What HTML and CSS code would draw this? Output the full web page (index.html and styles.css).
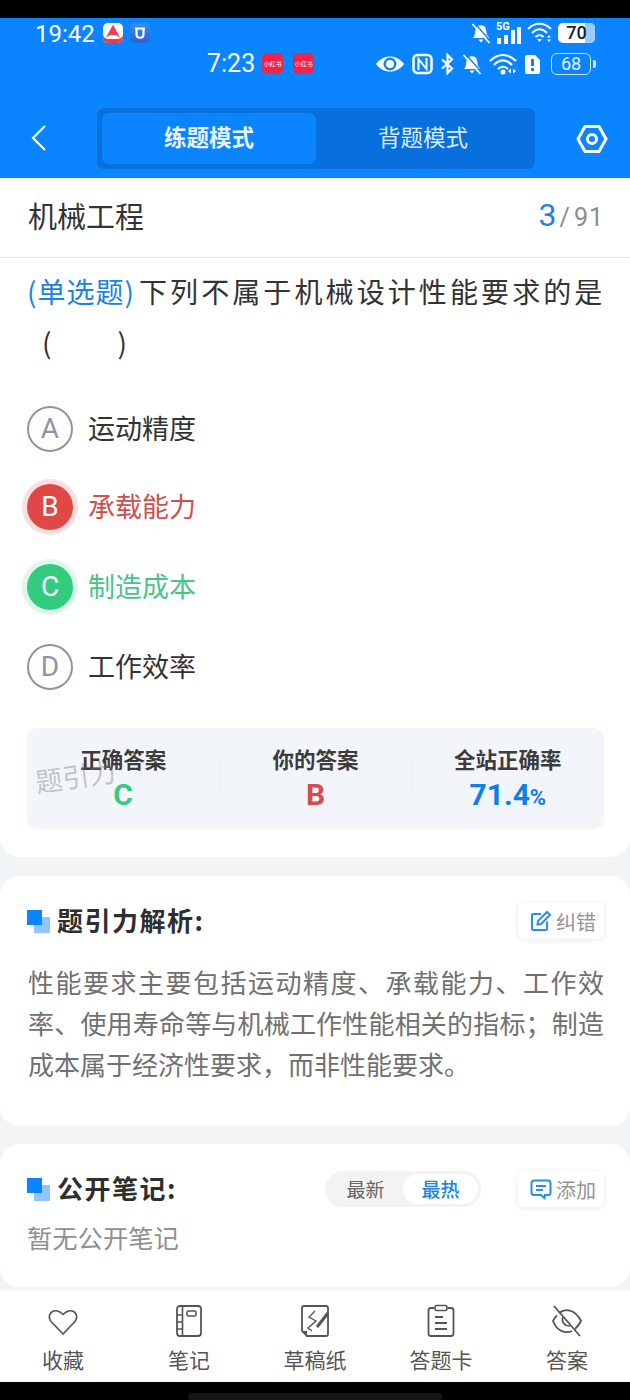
FILE: index.html
```html
<!DOCTYPE html>
<html lang="zh">
<head>
    <meta charset="UTF-8">
    <meta name="viewport" content="width=device-width, initial-scale=1.0">
    <title>题引力</title>
    <link rel="stylesheet" href="styles.css">
</head>
<body>
    <div class="phone">
        <div class="black-top"></div>

        <header class="header">
            <div class="status status-one">
                <span class="time">19:42</span>
                <span class="app-a"><svg width="20" height="20" viewBox="0 0 20 20"><path d="M10 1.500 L17 14.500 L12.500 12 L7.500 12 L3 14.500 Z" fill="#f0404f"/></svg></span>
                <span class="app-u"><svg width="20" height="20" viewBox="0 0 20 20"><path d="M5 5.500 H15 M6.500 5.500 V11 C6.500 16 13.500 16 13.500 11 V5.500" fill="none" stroke="#fff" stroke-width="2.200"/></svg></span>
                <span class="grow"></span>
                <svg class="ic" width="20" height="22" viewBox="0 0 20 22"><path d="M2 16 C5 13 3.500 8 5.500 5.500 C7.500 2.500 12.500 2.500 14.500 5.500 L16 13 L18.500 16 Z M7.500 17.500 H12.500 L10 20.500 Z" fill="#fff"/><path d="M1.500 2 L18.500 21" stroke="#fff" stroke-width="1.800"/><path d="M3.500 1 L20 19.500" stroke="#0a84ff" stroke-width="1.300"/></svg>
                <svg class="ic sig" width="26" height="24" viewBox="0 0 26 24"><rect x="1" y="17" width="4" height="6" fill="#fff"/><rect x="8" y="14" width="4" height="9" fill="#fff"/><rect x="15" y="9" width="4" height="14" fill="#fff"/><rect x="21" y="6" width="4" height="17" fill="#fff"/><text x="0" y="9" class="five-g">5G</text></svg>
                <svg class="ic" width="26" height="22" viewBox="0 0 26 22"><path d="M1 7 C8 0 17 0 24 7 M5 11 C10 6 15 6 20 11 M8.500 15 C11 12.500 14 12.500 16.500 15" fill="none" stroke="#fff" stroke-width="2"/><path d="M10 17 H15 L12.500 20 Z M20 15.500 L22 13 L24 15.500 Z M20 17.500 H24 L22 20 Z" fill="#fff"/></svg>
                <span class="batt-fill"><span class="batt-rest"></span><span class="batt-num">70</span></span>
            </div>

            <div class="status status-two">
                <span class="time time-two">7:23</span>
                <span class="xhs">小红书</span>
                <span class="xhs">小红书</span>
                <span class="grow"></span>
                <svg class="ic" width="30" height="20" viewBox="0 0 30 20"><path fill-rule="evenodd" d="M1 10 C8 0 22 0 29 10 C22 20 8 20 1 10 Z M15 3.500 A6.500 6.500 0 1 0 15 16.500 A6.500 6.500 0 1 0 15 3.500 Z" fill="#fff"/><circle cx="15" cy="10" r="4" fill="#fff"/></svg>
                <svg class="ic" width="21" height="22" viewBox="0 0 21 22"><rect x="1.500" y="2" width="18" height="18" rx="4" fill="none" stroke="#fff" stroke-width="2.500"/><path d="M6.500 17 V6 L14.500 16 V5" fill="none" stroke="#fff" stroke-width="2"/></svg>
                <svg class="ic" width="15" height="22" viewBox="0 0 15 22"><path d="M2 6.500 L12 15.500 L7.500 20 V2 L12 6.500 L2 15.500" fill="none" stroke="#fff" stroke-width="2.200"/></svg>
                <svg class="ic" width="20" height="22" viewBox="0 0 20 22"><path d="M2 16 C5 13 3.500 8 5.500 5.500 C7.500 2.500 12.500 2.500 14.500 5.500 L16 13 L18.500 16 Z M7.500 17.500 H12.500 L10 20.500 Z" fill="#fff"/><path d="M1.500 2 L18.500 21" stroke="#fff" stroke-width="1.800"/><path d="M3.500 1 L20 19.500" stroke="#0a84ff" stroke-width="1.300"/></svg>
                <svg class="ic" width="28" height="22" viewBox="0 0 28 22"><path d="M1 8 C9 0 19 0 27 8 M5 12 C11 6 17 6 23 12 M9 16 C12 13 16 13 19 16" fill="none" stroke="#fff" stroke-width="2.200"/><circle cx="14" cy="19" r="2.500" fill="#fff"/><path d="M19 18 L22 15.500 V20.500 Z M27 18 L24 15.500 V20.500 Z" fill="#fff"/></svg>
                <svg class="ic" width="17" height="22" viewBox="0 0 17 22"><path fill-rule="evenodd" d="M3 2 H11 L16 7 V19 Q16 21 14 21 H3 Q1 21 1 19 V4 Q1 2 3 2 Z M7 6 V13 H10 V6 Z M7 15 V18 H10 V15 Z" fill="#fff"/></svg>
                <span class="batt-line"><span class="batt-box">68</span><span class="batt-tip"></span></span>
            </div>

            <nav class="nav">
                <svg class="back" width="18" height="28" viewBox="0 0 18 28"><path d="M15 2 L3 14 L15 26" fill="none" stroke="#fff" stroke-width="2.200"/></svg>
                <div class="tabs">
                    <div class="tab tab-on">练题模式</div>
                    <div class="tab">背题模式</div>
                </div>
                <svg class="gear" width="32" height="30" viewBox="0 0 32 30"><path d="M9 2.500 H23 L30 15 L23 27.500 H9 L2 15 Z" fill="none" stroke="#fff" stroke-width="3" stroke-linejoin="round"/><circle cx="16" cy="15" r="4.500" fill="none" stroke="#fff" stroke-width="3"/></svg>
            </nav>
        </header>

        <div class="title-bar">
            <span class="subject">机械工程</span>
            <span class="count"><b>3</b><i>/</i>91</span>
        </div>

        <section class="card question">
            <p class="q-text"><span class="q-type">(单选题)</span>下列不属于机械设计性能要求的是</p>
            <p class="q-blank">(<span class="blank-gap"></span>)</p>

            <div class="option"><span class="letter">A</span><span class="opt-text">运动精度</span></div>
            <div class="option wrong"><span class="letter">B</span><span class="opt-text">承载能力</span></div>
            <div class="option right"><span class="letter">C</span><span class="opt-text">制造成本</span></div>
            <div class="option"><span class="letter">D</span><span class="opt-text">工作效率</span></div>

            <div class="stats">
                <div class="stat"><div class="stat-label">正确答案</div><div class="stat-val green">C</div></div>
                <div class="stat"><div class="stat-label">你的答案</div><div class="stat-val red">B</div></div>
                <div class="stat"><div class="stat-label">全站正确率</div><div class="stat-val blue">71.4<small>%</small></div></div>
                <span class="watermark">题引力</span>
            </div>
        </section>

        <section class="card analysis">
            <div class="card-head">
                <span class="mark"></span>
                <h2>题引力解析:</h2>
                <span class="grow"></span>
                <span class="mini-btn">
                    <svg width="22" height="22" viewBox="0 0 22 22"><path d="M17 11.500 V19 Q17 20 16 20 H3 Q2 20 2 19 V5 Q2 4 3 4 H11" fill="none" stroke="#2a8fe6" stroke-width="2"/><path d="M8 11 L17 2 L20 5 L11 14 L7.500 14.500 Z" fill="none" stroke="#2a8fe6" stroke-width="2"/></svg>
                    纠错
                </span>
            </div>
            <p class="analysis-text">性能要求主要包括运动精度、承载能力、工作效率、使用寿命等与机械工作性能相关的指标；制造成本属于经济性要求，而非性能要求。</p>
        </section>

        <section class="card notes">
            <div class="card-head">
                <span class="mark"></span>
                <h2>公开笔记:</h2>
                <span class="grow"></span>
                <div class="switch"><span class="sw">最新</span><span class="sw sw-on">最热</span></div>
                <span class="mini-btn">
                    <svg width="22" height="22" viewBox="0 0 22 22"><path d="M4 2.500 H18 Q20.500 2.500 20.500 5 V15 Q20.500 17 18 17 H15 L14.500 20 L11 17 H4 Q1.500 17 1.500 15 V5 Q1.500 2.500 4 2.500 Z" fill="none" stroke="#2a8fe6" stroke-width="2"/><path d="M6 8 H16 M6 12 H13" stroke="#2a8fe6" stroke-width="2"/></svg>
                    添加
                </span>
            </div>
            <p class="empty">暂无公开笔记</p>
        </section>

        <footer class="toolbar">
            <div class="tool">
                <svg width="34" height="34" viewBox="0 0 34 34"><path d="M17 30 L5 17.500 C-0.500 10 8.500 2 17 10.500 C25.500 2 34.500 10 29 17.500 Z" fill="none" stroke="#555" stroke-width="1.700"/></svg>
                <span>收藏</span>
            </div>
            <div class="tool">
                <svg width="34" height="34" viewBox="0 0 34 34"><rect x="5" y="2" width="24" height="30" rx="3" fill="none" stroke="#555" stroke-width="1.800"/><path d="M10.500 2 V32 M5 11 H10.500 M5 18 H10.500 M5 25 H10.500" stroke="#555" stroke-width="1.600"/><rect x="15" y="7" width="9" height="5" rx="1.500" fill="none" stroke="#555" stroke-width="1.600"/></svg>
                <span>笔记</span>
            </div>
            <div class="tool">
                <svg width="34" height="34" viewBox="0 0 34 34"><path d="M9 32 H28 Q30 32 30 30 V4 Q30 2 28 2 H6 Q4 2 4 4 V27 Z" fill="none" stroke="#555" stroke-width="1.800"/><path d="M4 27 H9 V32 Z" fill="#555"/><path d="M17 7 L11 13 L18 17 L10 24 L14 27" fill="none" stroke="#555" stroke-width="1.400"/><path d="M19 23 L30 9" stroke="#555" stroke-width="3"/></svg>
                <span>草稿纸</span>
            </div>
            <div class="tool">
                <svg width="34" height="34" viewBox="0 0 34 34"><path d="M10 4 H7 Q4.500 4 4.500 6.500 V29.500 Q4.500 32 7 32 H27 Q29.500 32 29.500 29.500 V6.500 Q29.500 4 27 4 H24" fill="none" stroke="#555" stroke-width="1.800"/><rect x="11" y="1.500" width="12" height="5" rx="1.500" fill="none" stroke="#555" stroke-width="1.600"/><path d="M11 13 H19 M11 19 H23 M11 25 H23" stroke="#555" stroke-width="1.800"/></svg>
                <span>答题卡</span>
            </div>
            <div class="tool">
                <svg width="34" height="34" viewBox="0 0 34 34"><path d="M9 9 C15 4 25 5 31 17 C29 21 27 23 25 25 M22 27 C15 30 7 27 3 17 C4 15 5 13 7 11.500" fill="none" stroke="#555" stroke-width="1.800"/><path d="M4 2 L30 32" stroke="#555" stroke-width="1.800"/><path d="M13 13 C11 17 14 22 20 22" fill="none" stroke="#555" stroke-width="1.600"/></svg>
                <span>答案</span>
            </div>
        </footer>

        <div class="black-bottom"><div class="home-bar"></div></div>
    </div>
</body>
</html>
```

FILE: styles.css
```css
* {
    box-sizing: border-box;
}
html, body {
    margin: 0;
    padding: 0;
}
body {
    font-family: 'Noto Sans CJK SC', 'Noto Sans', sans-serif;
    background: #f2f5f8;
    color: #333;
}
.phone {
    width: 630px;
    height: 1400px;
    display: flex;
    flex-direction: column;
    overflow: hidden;
}
.black-top {
    height: 18px;
    background: #000;
}
.grow {
    flex: 1;
}

/* header */
.header {
    height: 160px;
    background: #0a84ff;
    color: #fff;
}
.status {
    display: flex;
    align-items: center;
}
.status-one {
    height: 30px;
    padding: 1px 35px 0 35px;
    gap: 5px;
}
.status-two {
    height: 30px;
    margin-top: 1px;
    padding: 0 34px 0 207px;
    gap: 7px;
}
.time {
    font-family: 'Roboto', sans-serif;
    font-size: 24px;
    line-height: 30px;
    padding-top: 2px;
    margin-right: 3px;
}
.time-two {
    font-size: 25px;
    padding-top: 0;
    margin-right: 0;
}
.app-a {
    width: 20px;
    height: 20px;
    border-radius: 5px;
    background: #fff;
    display: block;
    box-shadow: inset 0 -4px 0 #ef3b50;
}
.app-a svg, .app-u svg {
    display: block;
}
.app-u {
    width: 20px;
    height: 20px;
    margin-left: 2px;
    border-radius: 5px;
    background: linear-gradient(#3b8cf0, #2a62d8);
}
.xhs {
    width: 21px;
    height: 21px;
    border-radius: 5px;
    background: #f0234a;
    font-size: 6px;
    line-height: 21px;
    text-align: center;
    white-space: nowrap;
    overflow: hidden;
}
.status-two .xhs + .xhs {
    margin-left: 3px;
}
.ic {
    display: block;
}
.five-g {
    font: bold 11px 'Roboto', sans-serif;
    fill: #fff;
}
.batt-fill {
    width: 37px;
    height: 20px;
    border-radius: 5px;
    background: #fff;
    color: #123;
    position: relative;
    font: 500 18px/20px 'Roboto', sans-serif;
    overflow: hidden;
    display: block;
}
.batt-num {
    display: block;
    position: relative;
    text-align: center;
}
.batt-rest {
    position: absolute;
    right: 0;
    top: 0;
    bottom: 0;
    width: 10px;
    background: #9ccbff;
}
.batt-line {
    display: flex;
    align-items: center;
    margin-left: 3px;
}
.batt-box {
    width: 40px;
    height: 22px;
    border: 1.5px solid #cfe6ff;
    border-radius: 6px;
    font: 18px/19px 'Roboto', sans-serif;
    text-align: center;
    color: #e6f2ff;
}
.batt-tip {
    width: 3px;
    height: 8px;
    margin-left: 2px;
    border-radius: 0 2px 2px 0;
    background: #cfe6ff;
}
.nav {
    margin-top: 29px;
    height: 62px;
    display: flex;
    align-items: center;
    padding-left: 30px;
}
.back {
    display: block;
    margin-top: -2px;
}
.tabs {
    width: 438px;
    height: 61px;
    margin-left: 49px;
    padding: 5px;
    background: #0870dc;
    border-radius: 7px;
    display: flex;
}
.tab {
    flex: 1;
    font-size: 22.500px;
    line-height: 46px;
    text-align: center;
    color: #dcecff;
}
.tab-on {
    background: #0a84ff;
    border-radius: 7px;
    font-weight: 700;
    color: #e9f4ff;
}
.gear {
    margin-left: 41px;
    display: block;
}

/* title */
.title-bar {
    height: 80px;
    padding: 0 26px 4px 28px;
    background: #fff;
    border-bottom: 1px solid #e4e6e8;
    display: flex;
    align-items: center;
    justify-content: space-between;
}
.subject {
    font-size: 29px;
    color: #333;
}
.count {
    font-family: 'Roboto', sans-serif;
    font-size: 25px;
    color: #8d8d8d;
    letter-spacing: 1px;
}
.count b {
    font-size: 32px;
    font-weight: 400;
    color: #1d83e3;
}
.count i {
    font-style: normal;
    margin: 0 3px 0 2px;
}

/* cards */
.card {
    background: #fff;
    padding: 0 26px 0 27px;
}
.question {
    height: 600px;
    padding-top: 13px;
    border-radius: 0 0 20px 20px;
    margin-bottom: 19px;
}
.q-text {
    margin: 0;
    font-size: 28px;
    line-height: 41px;
    letter-spacing: 3.100px;
    white-space: nowrap;
}
.q-type {
    color: #1d83e3;
    letter-spacing: 1px;
    margin-right: 4px;
}
.q-blank {
    margin: 10px 0 0;
    padding-left: 15px;
    font-size: 28px;
    line-height: 41px;
}
.blank-gap {
    display: inline-block;
    width: 66px;
}
.option {
    height: 46px;
    display: flex;
    align-items: center;
    gap: 15px;
    margin-top: 32px;
    font-size: 27px;
}
.q-blank + .option {
    margin-top: 43px;
}
.option + .option + .option {
    margin-top: 34px;
}
.opt-text {
    padding-bottom: 2px;
}
.letter {
    width: 46px;
    height: 46px;
    border: 2px solid #8e93a6;
    border-radius: 50%;
    color: #8e93a6;
    font-family: 'Roboto', sans-serif;
    font-size: 28px;
    line-height: 42px;
    text-align: center;
}
.wrong {
    color: #cf4f50;
}
.wrong .letter {
    background: #e04848;
    border-color: #e04848;
    color: #fff;
    box-shadow: 0 0 0 5px #f9dfdf;
}
.right {
    color: #46c587;
}
.right .letter {
    background: #33cc7f;
    border-color: #33cc7f;
    color: #fff;
    box-shadow: 0 0 0 5px #dff7ea;
}
.stats {
    margin-top: 38px;
    height: 101px;
    background: #f2f5f9;
    border-radius: 10px;
    display: flex;
    position: relative;
    padding: 15px 0 0;
}
.stat {
    flex: 1;
    text-align: center;
}
.stat + .stat {
    background: linear-gradient(#e9ecf0, #e9ecf0) no-repeat 0 20px / 1px 32px;
}
.stat-label {
    font-size: 21.500px;
    line-height: 31px;
    font-weight: 700;
    color: #3c3c3c;
}
.stat-val {
    font-family: 'Roboto', sans-serif;
    font-size: 30px;
    line-height: 42px;
    font-weight: 700;
}
.stat-val small {
    font-size: 22px;
}
.green {
    color: #35c986;
}
.red {
    color: #d84a4c;
}
.blue {
    color: #0f7fe8;
}
.watermark {
    position: absolute;
    left: 8px;
    top: 33px;
    font-size: 27px;
    line-height: 30px;
    color: rgba(120, 125, 135, 0.42);
    transform: rotate(-8deg);
}
.analysis {
    height: 250px;
    padding-top: 27px;
    border-radius: 20px;
    margin-bottom: 18px;
}
.card-head {
    height: 36px;
    display: flex;
    align-items: center;
}
.mark {
    width: 23px;
    height: 23px;
    margin-right: 7px;
    background: linear-gradient(#0a84ff, #0a84ff) no-repeat 0 0 / 15px 15px, linear-gradient(#8fc6ff, #8fc6ff) no-repeat 7px 7px / 16px 16px;
}
.card-head h2 {
    margin: 0 0 2px;
    font-size: 26px;
    line-height: 34px;
    font-weight: 700;
    color: #2e2e2e;
    letter-spacing: 1.500px;
}
.mini-btn {
    height: 36px;
    padding: 0 8px 0 12px;
    display: flex;
    align-items: center;
    gap: 4px;
    font-size: 20px;
    color: #949494;
    background: #fff;
    border-radius: 6px;
    box-shadow: 0 1px 6px rgba(0, 0, 0, 0.09);
}
.mini-btn svg {
    display: block;
}
.analysis-text {
    margin: 22px 0 0 1px;
    font-size: 26px;
    line-height: 41px;
    text-align: justify;
    color: #707070;
}
.notes {
    height: 143px;
    padding-top: 27px;
    border-radius: 20px;
}
.switch {
    width: 156px;
    height: 36px;
    padding: 3px;
    margin-right: 37px;
    background: #f3f3f3;
    border-radius: 18px;
    display: flex;
}
.sw {
    flex: 1;
    font-size: 19px;
    line-height: 30px;
    text-align: center;
    color: #666;
}
.sw-on {
    background: #fff;
    border-radius: 15px;
    color: #1d83e3;
    font-weight: 500;
}
.empty {
    margin: 12px 0 0;
    font-size: 25.300px;
    line-height: 36px;
    color: #909090;
}

/* bottom */
.toolbar {
    margin-top: 3px;
    height: 92px;
    background: #fff;
    display: flex;
    padding: 14px 0 0 0;
}
.tool {
    flex: 1;
    display: flex;
    flex-direction: column;
    align-items: center;
    font-size: 21px;
    line-height: 30px;
    color: #555;
}
.tool svg {
    display: block;
    margin-bottom: 6px;
}
.black-bottom {
    height: 18px;
    background: #000;
    padding-top: 11px;
}
.home-bar {
    width: 254px;
    height: 7px;
    margin: 0 auto;
    border-radius: 4px;
    background: #161616;
}
```
